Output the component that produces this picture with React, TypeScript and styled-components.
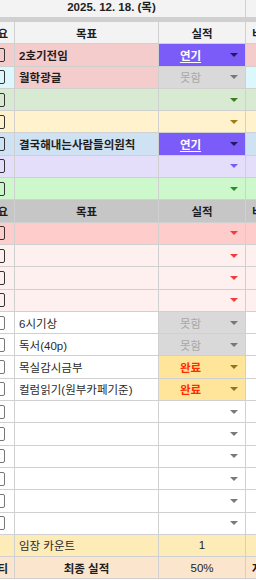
import styled, { createGlobalStyle } from "styled-components";

const GlobalStyles = createGlobalStyle`
  * {
    margin: 0;
    padding: 0;
    box-sizing: border-box;
  }
  body {
    width: 256px;
    height: 580px;
    overflow: hidden;
    background: #ffffff;
    font-family: "Liberation Sans", "Noto Sans CJK KR", sans-serif;
    font-size: 11.5px;
    color: #222222;
  }
`;

type Status = "delay" | "fail" | "done";

type DataRow = {
  kind: "data";
  goal?: string;
  bold?: boolean;
  leftBg: string;
  goalBg: string;
  rightBg: string;
  status?: Status;
  arrow: string;
  box?: string;
};

type HeadRow = { kind: "head"; bg: string };

type Row = DataRow | HeadRow;

const PINK = "#f4cccc";
const WHITE = "#ffffff";

const rows: Row[] = [
  { kind: "head", bg: "#f3f3f3" },
  { kind: "data", goal: "2호기전임", bold: true, leftBg: PINK, goalBg: PINK, rightBg: PINK, status: "delay", arrow: "#1d1a66" },
  { kind: "data", goal: "월학광글", bold: true, leftBg: "#ddf8fd", goalBg: PINK, rightBg: "#ddf8fd", status: "fail", arrow: "#777777" },
  { kind: "data", leftBg: "#d9ead3", goalBg: "#d9ead3", rightBg: "#d9ead3", arrow: "#3d7a22" },
  { kind: "data", leftBg: "#fff2cc", goalBg: "#fff2cc", rightBg: "#fff2cc", arrow: "#a07c16" },
  { kind: "data", goal: "결국해내는사람들의원칙", bold: true, leftBg: "#cfe2f3", goalBg: "#cfe2f3", rightBg: "#cfe2f3", status: "delay", arrow: "#1d1a66" },
  { kind: "data", leftBg: "#e4defb", goalBg: "#e4defb", rightBg: "#e4defb", arrow: "#7a5af8" },
  { kind: "data", leftBg: "#ccf8cc", goalBg: "#ccf8cc", rightBg: "#ccf8cc", arrow: "#2f8a2f" },
  { kind: "head", bg: "#c6c6c6" },
  { kind: "data", leftBg: "#ffcccc", goalBg: "#ffcccc", rightBg: "#ffcccc", arrow: "#f23b3b" },
  { kind: "data", leftBg: "#fff0f0", goalBg: "#fff0f0", rightBg: "#fff0f0", arrow: "#f23b3b" },
  { kind: "data", leftBg: "#fff0f0", goalBg: "#fff0f0", rightBg: "#fff0f0", arrow: "#f23b3b" },
  { kind: "data", leftBg: "#fff0f0", goalBg: "#fff0f0", rightBg: "#fff0f0", arrow: "#f23b3b" },
  { kind: "data", goal: "6시기상", leftBg: WHITE, goalBg: WHITE, rightBg: WHITE, status: "fail", arrow: "#777777", box: "#777777" },
  { kind: "data", goal: "독서(40p)", leftBg: WHITE, goalBg: WHITE, rightBg: WHITE, status: "fail", arrow: "#777777", box: "#777777" },
  { kind: "data", goal: "목실감시금부", leftBg: WHITE, goalBg: WHITE, rightBg: WHITE, status: "done", arrow: "#8f7516", box: "#777777" },
  { kind: "data", goal: "컬럼읽기(원부카페기준)", leftBg: WHITE, goalBg: WHITE, rightBg: WHITE, status: "done", arrow: "#8f7516", box: "#777777" },
  ...Array.from({ length: 6 }, (): Row => ({
    kind: "data",
    leftBg: WHITE,
    goalBg: WHITE,
    rightBg: WHITE,
    arrow: "#7a7a7a",
    box: "#777777",
  })),
];

const statusStyle: Record<Status, { bg: string; label: string }> = {
  delay: { bg: "#7b5cf8", label: "연기" },
  fail: { bg: "#d9d9d9", label: "못함" },
  done: { bg: "#ffe599", label: "완료" },
};

const Sheet = styled.div`
  width: 256px;
`;

const DateRow = styled.div`
  height: 22px;
  display: grid;
  grid-template-columns: 246px 10px;
  background: #f3f3f3;
  border-bottom: 5px solid #d0d0d0;
`;

const DateCell = styled.div`
  border-right: 1px solid #d0d0d0;
  padding: 1px 22px 0 0;
  text-align: center;
  font-weight: 700;
  font-size: 11.5px;
  line-height: 13px;
  color: #1e1e1e;
`;

const GridRow = styled.div`
  display: grid;
  grid-template-columns: 15px 144px 87px 10px;
  height: 22.3px;
`;

const Cell = styled.div<{ $bg: string }>`
  background: ${(p) => p.$bg};
  border-right: 1px solid #d0d0d0;
  border-bottom: 1px solid #d0d0d0;
  display: flex;
  align-items: center;
  overflow: hidden;
  white-space: nowrap;
`;

const LeftCell = styled(Cell)`
  justify-content: flex-end;
  padding-right: 6px;
`;

const EdgeCell = styled(Cell)`
  border-right: none;
  padding-left: 6px;
`;

const HeadText = styled.span`
  flex: 1;
  text-align: center;
  font-weight: 700;
  color: #1e1e1e;
`;

const GoalText = styled.span<{ $bold?: boolean }>`
  padding-left: 4px;
  font-weight: ${(p) => (p.$bold ? 700 : 400)};
  color: ${(p) => (p.$bold ? "#1e1e1e" : "#2a2a2a")};
`;

const Checkbox = styled.span<{ $c: string }>`
  flex: none;
  width: 12px;
  height: 14px;
  margin-right: 3px;
  border: 1.5px solid ${(p) => p.$c};
  border-radius: 2px;
`;

const StatusCell = styled(Cell)`
  padding-right: 7px;
`;

const Label = styled.span<{ $s?: Status }>`
  flex: 1;
  text-align: center;
  font-weight: ${(p) => (p.$s === "fail" ? 400 : 700)};
  color: ${(p) =>
    p.$s === "delay" ? "#ffffff" : p.$s === "done" ? "#ff2a00" : "#a8a8a8"};
  text-decoration: ${(p) => (p.$s === "delay" ? "underline" : "none")};
  text-underline-offset: 2px;
`;

const Arrow = styled.span<{ $c: string }>`
  flex: none;
  margin-left: 8px;
  width: 0;
  height: 0;
  border-left: 4px solid transparent;
  border-right: 4px solid transparent;
  border-top: 4.5px solid ${(p) => p.$c};
`;

const CenterText = styled.span<{ $bold?: boolean }>`
  flex: 1;
  text-align: center;
  font-weight: ${(p) => (p.$bold ? 700 : 400)};
  color: #1e1e1e;
`;

function Head({ bg }: { bg: string }) {
  return (
    <GridRow>
      <LeftCell $bg={bg}>
        <HeadText>요</HeadText>
      </LeftCell>
      <Cell $bg={bg}>
        <HeadText>목표</HeadText>
      </Cell>
      <Cell $bg={bg}>
        <HeadText>실적</HeadText>
      </Cell>
      <EdgeCell $bg={bg}>
        <HeadText>비</HeadText>
      </EdgeCell>
    </GridRow>
  );
}

function Data({ row }: { row: DataRow }) {
  const st = row.status ? statusStyle[row.status] : null;
  return (
    <GridRow>
      <LeftCell $bg={row.leftBg}>
        <Checkbox $c={row.box ?? "#333333"} />
      </LeftCell>
      <Cell $bg={row.goalBg}>
        {row.goal && <GoalText $bold={row.bold}>{row.goal}</GoalText>}
      </Cell>
      <StatusCell $bg={st ? st.bg : row.goalBg}>
        <Label $s={row.status}>{st ? st.label : ""}</Label>
        <Arrow $c={row.arrow} />
      </StatusCell>
      <EdgeCell $bg={row.rightBg} />
    </GridRow>
  );
}

export default function App() {
  return (
    <Sheet>
      <GlobalStyles />
      <DateRow>
        <DateCell>2025. 12. 18. (목)</DateCell>
        <div />
      </DateRow>
      {rows.map((r, i) =>
        r.kind === "head" ? <Head key={i} bg={r.bg} /> : <Data key={i} row={r} />
      )}
      <GridRow>
        <LeftCell $bg="#fdebb8" />
        <Cell $bg="#fdebb8">
          <GoalText>임장 카운트</GoalText>
        </Cell>
        <Cell $bg="#fdebb8">
          <CenterText>1</CenterText>
        </Cell>
        <EdgeCell $bg="#fdebb8" />
      </GridRow>
      <GridRow>
        <LeftCell $bg="#fce5cd">
          <HeadText>티</HeadText>
        </LeftCell>
        <Cell $bg="#fce5cd">
          <CenterText $bold>최종 실적</CenterText>
        </Cell>
        <Cell $bg="#fce5cd">
          <CenterText>50%</CenterText>
        </Cell>
        <EdgeCell $bg="#fce5cd">
          <HeadText>자</HeadText>
        </EdgeCell>
      </GridRow>
    </Sheet>
  );
}
